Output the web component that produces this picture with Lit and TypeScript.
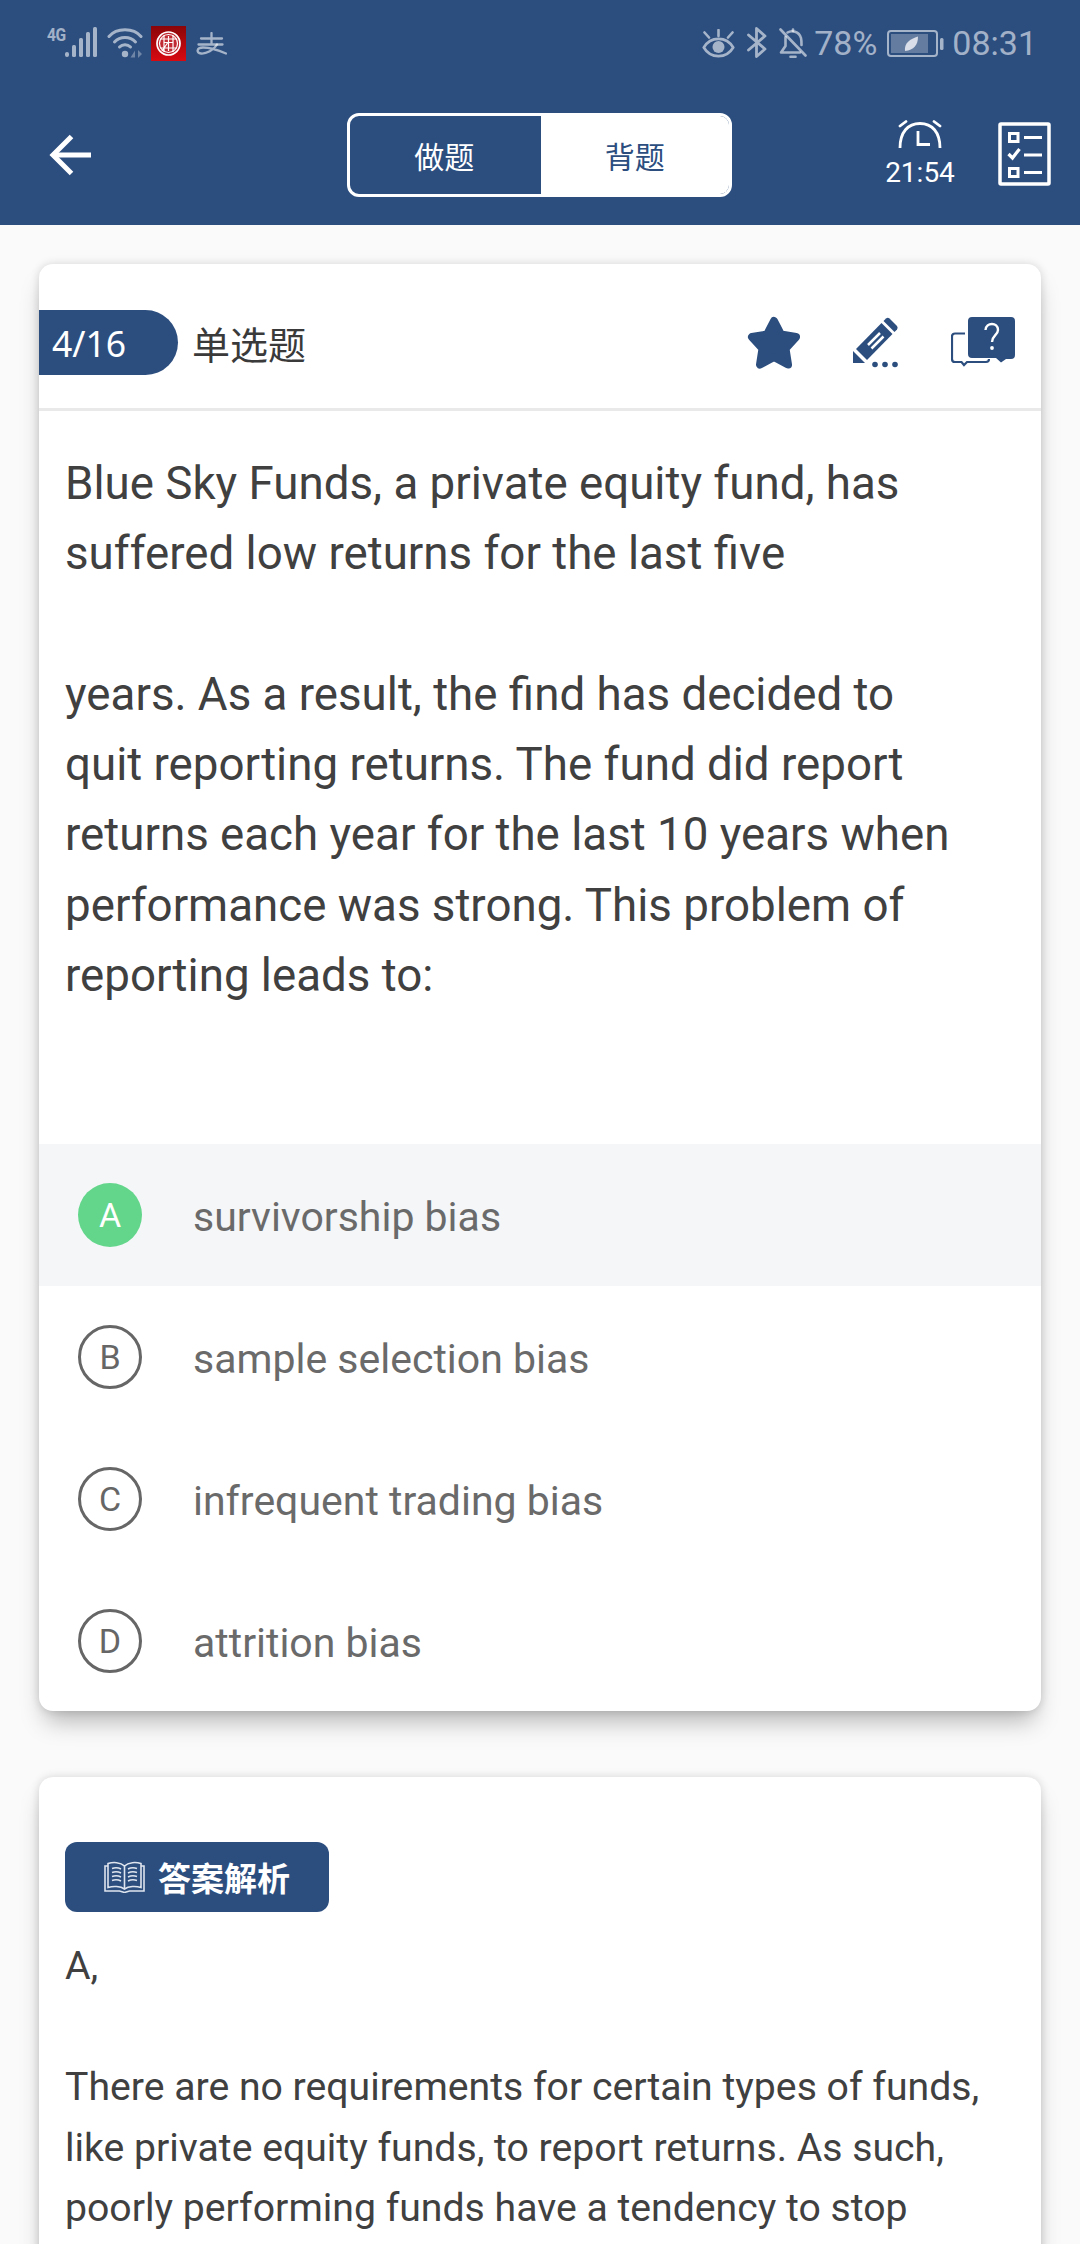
import { LitElement, html, css } from "lit";
import { customElement } from "lit/decorators.js";

const signal = html`<svg class="i" width="32" height="31" viewBox="0 0 32 31" fill="currentColor">
  <rect x="0" y="25" width="4" height="5" rx="2"/><rect x="7" y="18" width="4" height="12" rx="1.500"/><rect x="14" y="11" width="4" height="19" rx="1.500"/><rect x="21" y="5" width="4" height="25" rx="1.500"/><rect x="28" y="0" width="4" height="30" rx="1.500"/></svg>`;
const wifi = html`<svg class="i" width="36" height="30" viewBox="0 0 36 30" fill="none" stroke="currentColor" stroke-linecap="round">
  <path d="M2 8.500C9.500 -0.500 26.500 -0.500 34 8.500" stroke-width="3"/><path d="M7.500 14C13 8 23 8 28.500 14" stroke-width="3"/><path d="M12.500 19C15.500 16 20.500 16 23.500 19" stroke-width="3"/>
  <circle cx="18" cy="26" r="3.200" fill="currentColor" stroke="none"/>
  <path d="M28 22.500v7h-4.500zM31 22v8l4-4z" fill="currentColor" stroke="none" opacity=".55"/></svg>`;
const seal = html`<svg class="i" width="35" height="35" viewBox="0 0 35 35">
  <defs><linearGradient id="rd" x1="0" y1="0" x2="0" y2="1"><stop offset="0" stop-color="#8a0508"/><stop offset="1" stop-color="#d80a12"/></linearGradient></defs>
  <rect width="35" height="35" fill="url(#rd)"/>
  <circle cx="17.500" cy="17.500" r="11.500" fill="#c02a32" stroke="#fff" stroke-width="1.700"/>
  <g fill="none" stroke="#fff" stroke-width="1.200"><circle cx="17.500" cy="17.500" r="9"/><path d="M9 13h17M9 22h17M13 9v17M22 9v17M13 16.500h9M17.500 10v15M11 25l5.500-8"/></g></svg>`;
const alipay = html`<svg class="i" width="31" height="23" viewBox="0 0 31 23" fill="none" stroke="currentColor" stroke-width="2.300" stroke-linecap="round">
  <path d="M5 6.500h21M15.500 1v11M2.500 12.500h24"/><path d="M21 12.500C18 18 10 22 5 21.500C0 21 0.500 15.500 7 15.500C13 15.500 22 18 30 21.500"/></svg>`;
const eye = html`<svg class="i" width="33" height="29" viewBox="0 0 33 29" fill="none" stroke="currentColor" stroke-width="2.600" stroke-linecap="round">
  <path d="M1.800 18.500C8.500 7 24.500 7 31.200 18.500C24.500 30 8.500 30 1.800 18.500Z"/><circle cx="16.500" cy="18" r="6" fill="currentColor" stroke="none"/>
  <path d="M2.500 3.500l4.500 5M16.500 1v6M30.500 3.500l-4.500 5"/></svg>`;
const bt = html`<svg class="i" width="20" height="31" viewBox="0 0 20 31" fill="none" stroke="currentColor" stroke-width="2.800" stroke-linejoin="round" stroke-linecap="round">
  <path d="M1.500 8L18 22L9.500 29.500V1.500L18 9L1.500 23"/></svg>`;
const bell = html`<svg class="i" width="28" height="30" viewBox="0 0 28 30" fill="none" stroke="currentColor" stroke-width="2.600" stroke-linecap="round" stroke-linejoin="round">
  <path d="M6.500 9V18L2 24.500H21"/><path d="M8.500 4.500C12.500 2 20 3 22 10C22.500 12 22.500 15 22.500 17"/><path d="M14 3V1.500"/><path d="M1.500 1.500L26.500 27.500"/><path d="M11.500 28.800h5"/></svg>`;
const battery = html`<svg class="i" width="57" height="27" viewBox="0 0 57 27" fill="none">
  <rect x="1" y="1" width="49" height="25" rx="3" stroke="currentColor" stroke-width="2"/>
  <rect x="4" y="4" width="37" height="19" fill="currentColor" opacity=".45"/>
  <rect x="53" y="8" width="3.500" height="12" rx="1.500" fill="currentColor"/>
  <path d="M18 21C17 13 23 9 31 6.500C31 15 27 20 18 21Z" fill="#d9dee8"/></svg>`;

const back = html`<svg width="42" height="42" viewBox="0 0 42 42" fill="none" stroke="#fff" stroke-width="5" class="i">
  <path d="M22.500 2.500L4 21L22.500 39.500"/><path d="M4 21H42"/></svg>`;
const alarm = html`<svg width="44" height="28" viewBox="0 0 44 28" fill="none" stroke="#fff" stroke-width="2.800" class="i">
  <path d="M2 28C2 12 10 3.500 22 3.500C34 3.500 42 12 42 28"/><path d="M20 11V24.500H32"/><path d="M2 6L8 1.500M42 6L36 1.500" stroke-linecap="round"/></svg>`;
const checklist = html`<svg width="53" height="64" viewBox="0 0 53 64" fill="none" stroke="#fff" class="i">
  <rect x="2" y="2" width="49" height="60" rx="1" stroke-width="3.500"/>
  <rect x="11.500" y="11.500" width="8.500" height="8" stroke-width="3"/><path d="M26 15.500H44M26 33H44M26 50.500H44" stroke-width="3"/>
  <path d="M10.500 32l4 4 7-9" stroke-width="3.200"/><rect x="11.500" y="46.500" width="8.500" height="8" stroke-width="3"/></svg>`;

const star = html`<svg width="54" height="54" viewBox="0 0 54 54" class="i"><path fill="#2c4e7f" stroke="#2c4e7f" stroke-width="8" stroke-linejoin="round" d="M27 5L34 18.500L49 21L38.500 32.500L41 48.500L27 41L13 48.500L15.500 32.500L5 21L20 18.500Z"/></svg>`;
const pencil = html`<svg width="48" height="52" viewBox="0 0 48 52" class="i">
  <g fill="#2c4e7f"><path d="M35 1.500a3 3 0 0 1 3.500 0L46 9a3 3 0 0 1 0 3.500l-2.500 2.500L32.500 4Z"/>
  <path d="M30.500 6L41.500 17L16 43L5 32Z"/><path d="M2 34L14 46H2Z"/></g>
  <path d="M17 28L29 16M20.500 31.500L32.500 19.500" stroke="#fff" stroke-width="2.500"/>
  <g fill="#2c4e7f"><circle cx="24" cy="47.500" r="2.800"/><circle cx="34" cy="47.500" r="2.800"/><circle cx="44" cy="47.500" r="2.800"/></g></svg>`;
const chat = html`<svg width="64" height="52" viewBox="0 0 64 52" class="i">
  <path d="M14 16.500H4a3 3 0 0 0-3 3V42a3 3 0 0 0 3 3H10.500L13 48L16 45H35a3 3 0 0 0 3-3" fill="none" stroke="#2c4e7f" stroke-width="2.200"/>
  <path d="M21 0H60a4 4 0 0 1 4 4V38a4 4 0 0 1-4 4H55L50 45.500L45 41H21a4 4 0 0 1-4-4V4a4 4 0 0 1 4-4Z" fill="#2c4e7f"/>
  <path d="M34.500 13C35 5 47 5 47 13C47 18 41 18.500 41 25" fill="none" stroke="#fff" stroke-width="2.400"/><circle cx="41" cy="31" r="1.900" fill="#fff"/></svg>`;
const book = html`<svg width="41" height="32" viewBox="0 0 41 32" fill="none" stroke="#dfe5ee" stroke-width="1.600" class="i">
  <path d="M20.500 5C16.500 1 9 1 4 2.500V26.500C9 25 16.500 25 20.500 28C24.500 25 32 25 37 26.500V2.500C32 1 24.500 1 20.500 5Z"/><path d="M20.500 5V28"/>
  <path d="M4 5H1V30H15.500L20.500 31.500L25.500 30H40V5H37"/>
  <path d="M8 7.500C11 6.500 14 6.500 17 8M8 11.500C11 10.500 14 10.500 17 12M8 15.500C11 14.500 14 14.500 17 16M8 19.500C11 18.500 14 18.500 17 20M24 8C27 6.500 30 6.500 33 7.500M24 12C27 10.500 30 10.500 33 11.500M24 16C27 14.500 30 14.500 33 15.500M24 20C27 18.500 30 18.500 33 19.500"/></svg>`;

@customElement("app-root")
export class AppRoot extends LitElement {
  static styles = css`
    :host { display: block; height: 2244px; overflow: hidden; background: #fafafa; font-family: Roboto, "Noto Sans CJK SC", sans-serif; }
    .i { display: block; flex: none; }
    .top { background: #2c4e7f; height: 225px; }
    .status { height: 86px; display: flex; align-items: center; justify-content: space-between; padding: 0 43px 0 47px; color: rgba(255,255,255,.58); }
    .side { display: flex; align-items: center; }
    .g4 { font: 700 19px/1 Roboto, sans-serif; width: 18px; align-self: flex-start; margin-top: -1px; letter-spacing: -.5px; transform: scaleX(.82); transform-origin: left; white-space: nowrap; }
    .sig { margin-top: -1px; }
    .wifi { margin-left: 10px; margin-top: -1px; }
    .seal { margin-left: 8px; }
    .ali { margin-left: 10px; margin-top: 1px; }
    .st { font-size: 34px; line-height: 1; }
    .bt { margin-left: 12px; margin-top: -1px; } .bl { margin-left: 12px; } .pc { margin-left: 7px; } .bat { margin-left: 10px; } .time { margin-left: 8px; }
    .bar { height: 139px; display: flex; align-items: center; padding-left: 49px; }
    .back { margin-top: -2px; }
    .toggle { margin-left: 256px; width: 385px; height: 84px; margin-top: -2px; box-sizing: border-box; display: flex; border: 3px solid #fff; border-radius: 12px; overflow: hidden; font-size: 30px; }
    .toggle div { flex: 1; display: flex; align-items: center; justify-content: center; color: #fff; font-family: "Noto Sans CJK SC", sans-serif; }
    .toggle div:first-child { padding-right: 2px; }
    .toggle .on { background: #fff; color: #2c4e7f; }
    .alarm { margin-left: 138px; width: 100px; display: flex; flex-direction: column; align-items: center; color: #fff; font-size: 28px; line-height: 30px; gap: 10px; margin-top: -4px; }
    .check { margin-left: 28px; margin-top: -3px; }
    .card { margin: 0 39px; background: #fff; border-radius: 14px; box-shadow: 0 16px 24px -6px rgba(0,0,0,.28), 0 0 10px rgba(0,0,0,.14); overflow: hidden; }
    .one { margin-top: 39px; height: 1447px; }
    .head { height: 144px; border-bottom: 3px solid #e9e9e9; display: flex; align-items: center; }
    .pill { width: 139px; height: 65px; box-sizing: border-box; padding-left: 13px; border-radius: 0 33px 33px 0; background: #2c4e7f; color: #fff; display: flex; align-items: center; font: 35.500px "Noto Sans", sans-serif; margin-top: 13px; }
    .kind { margin-left: 14px; font: 38px "Noto Sans CJK SC", sans-serif; color: #3a3a3a; margin-top: 13px; }
    .tools { margin-left: auto; display: flex; align-items: center; padding-right: 26px; margin-top: 13px; }
    .tools .pen { margin-left: 50px; } .tools .ct { margin-left: 52px; }
    .q { font-size: 45.700px; line-height: 70.300px; color: #404040; padding: 38px 26px 0; height: 733px; box-sizing: border-box; margin: 0; }
    .opt { height: 142px; display: flex; align-items: center; padding-left: 39px; color: #6a6a6a; font-size: 41px; }
    .opt > span:last-child { margin-top: 3px; }
    .opt.sel { background: #f5f6f8; }
    .l { width: 64px; height: 64px; box-sizing: border-box; border: 3px solid #666; border-radius: 50%; display: flex; align-items: center; justify-content: center; font-size: 34px; flex: none; margin-right: 51px; color: #666; }
    .sel .l { border: 0; background: #63d68b; color: #fff; }
    .two { margin-top: 66px; padding: 65px 26px 0; height: 700px; }
    .btn { width: 264px; height: 70px; box-sizing: border-box; padding-left: 39px; display: flex; align-items: center; gap: 13px; border-radius: 12px; background: #2c4e7f; color: #fff; font: 700 33px "Noto Sans CJK SC", sans-serif; }
    .a { margin: 24px 0 0; font-size: 39.200px; line-height: 60.500px; color: #404040; }
  `;

  render() {
    const opts = [["A", "survivorship bias"], ["B", "sample selection bias"], ["C", "infrequent trading bias"], ["D", "attrition bias"]];
    return html`
      <div class="top">
        <div class="status">
          <div class="side"><span class="g4">4G</span><span class="sig">${signal}</span><span class="wifi">${wifi}</span><span class="seal">${seal}</span><span class="ali">${alipay}</span></div>
          <div class="side"><span>${eye}</span><span class="bt">${bt}</span><span class="bl">${bell}</span><span class="st pc">78%</span><span class="bat">${battery}</span><span class="st time">08:31</span></div>
        </div>
        <div class="bar">
          <span class="back">${back}</span>
          <div class="toggle"><div>做题</div><div class="on">背题</div></div>
          <div class="alarm">${alarm}<span>21:54</span></div>
          <div class="check">${checklist}</div>
        </div>
      </div>
      <div class="card one">
        <div class="head">
          <div class="pill">4/16</div><div class="kind">单选题</div>
          <div class="tools">${star}<span class="pen">${pencil}</span><span class="ct">${chat}</span></div>
        </div>
        <p class="q">Blue Sky Funds, a private equity fund, has<br>suffered low returns for the last five<br><br>years. As a result, the find has decided to<br>quit reporting returns. The fund did report<br>returns each year for the last 10 years when<br>performance was strong. This problem of<br>reporting leads to:</p>
        ${opts.map(([l, t], i) => html`<div class="opt ${i === 0 ? "sel" : ""}"><span class="l">${l}</span><span>${t}</span></div>`)}
      </div>
      <div class="card two">
        <div class="btn">${book}<span>答案解析</span></div>
        <p class="a">A,<br><br>There are no requirements for certain types of funds,<br>like private equity funds, to report returns. As such,<br>poorly performing funds have a tendency to stop</p>
      </div>
    `;
  }
}
